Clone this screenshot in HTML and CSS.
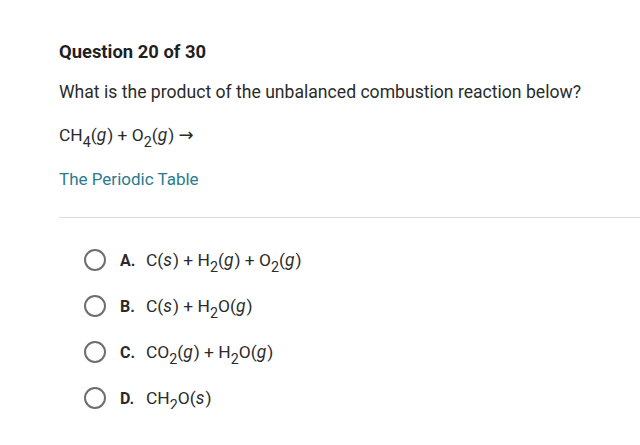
FILE: index.html
```html
<!DOCTYPE html>
<html>
<head>
<meta charset="utf-8">
<link rel="stylesheet" href="styles.css">
</head>
<body>
<div class="page">
  <h1 class="title">Question 20 of 30</h1>
  <p class="question">What is the product of the unbalanced combustion reaction below?</p>
  <p class="equation">CH<sub>4</sub>(<i>g</i>) + O<sub>2</sub>(<i>g</i>) <span class="arrow">→</span></p>
  <a class="link">The Periodic Table</a>
  <hr class="divider">
  <ul class="options">
    <li class="option"><span class="radio"></span><b class="letter">A.</b><span class="answer">C(<i>s</i>) + H<sub>2</sub>(<i>g</i>) + O<sub>2</sub>(<i>g</i>)</span></li>
    <li class="option"><span class="radio"></span><b class="letter">B.</b><span class="answer">C(<i>s</i>) + H<sub>2</sub>O(<i>g</i>)</span></li>
    <li class="option"><span class="radio"></span><b class="letter">C.</b><span class="answer">CO<sub>2</sub>(<i>g</i>) + H<sub>2</sub>O(<i>g</i>)</span></li>
    <li class="option"><span class="radio"></span><b class="letter">D.</b><span class="answer">CH<sub>2</sub>O(<i>s</i>)</span></li>
  </ul>
</div>
</body>
</html>
```
FILE: styles.css
```css
html, body {
  margin: 0;
  padding: 0;
  background: #fff;
}
body {
  font-family: Roboto, "Noto Sans", sans-serif;
  color: #2b2b2b;
}
.page {
  padding: 41px 0 0 59px;
}
.title {
  margin: 0;
  font-size: 18.4px;
  font-weight: 700;
  line-height: 22px;
  color: #1f1f1f;
}
.question {
  margin: 18px 0 0;
  font-size: 17.6px;
  line-height: 22px;
}
.equation {
  margin: 21px 0 0;
  font-size: 17.4px;
  line-height: 22px;
}
i {
  padding-right: 1px;
}
.arrow {
  font-family: "DejaVu Sans", sans-serif;
  font-size: 18px;
  line-height: 0;
}
sub {
  font-size: 0.82em;
  line-height: 0;
  vertical-align: -0.4em;
}
.link {
  display: block;
  margin-top: 22px;
  font-size: 17px;
  line-height: 22px;
  color: #2a7b8c;
}
.divider {
  margin: 27px 0 0;
  border: 0;
  border-top: 1px solid #dcdcdc;
  height: 0;
}
.options {
  list-style: none;
  margin: 0;
  padding: 31px 0 0 25px;
  display: flex;
  flex-direction: column;
  gap: 24px;
}
.option {
  display: flex;
  align-items: center;
  height: 22px;
  font-size: 17.4px;
}
.radio {
  width: 18px;
  height: 18px;
  border: 2px solid #6e6e6e;
  border-radius: 50%;
  box-sizing: content-box;
  flex: none;
}
.letter {
  margin-left: 14px;
  font-weight: 700;
  width: 26px;
  font-size: 16px;
  color: #2b2b2b;
}
.answer {
  color: #2b2b2b;
}
```
